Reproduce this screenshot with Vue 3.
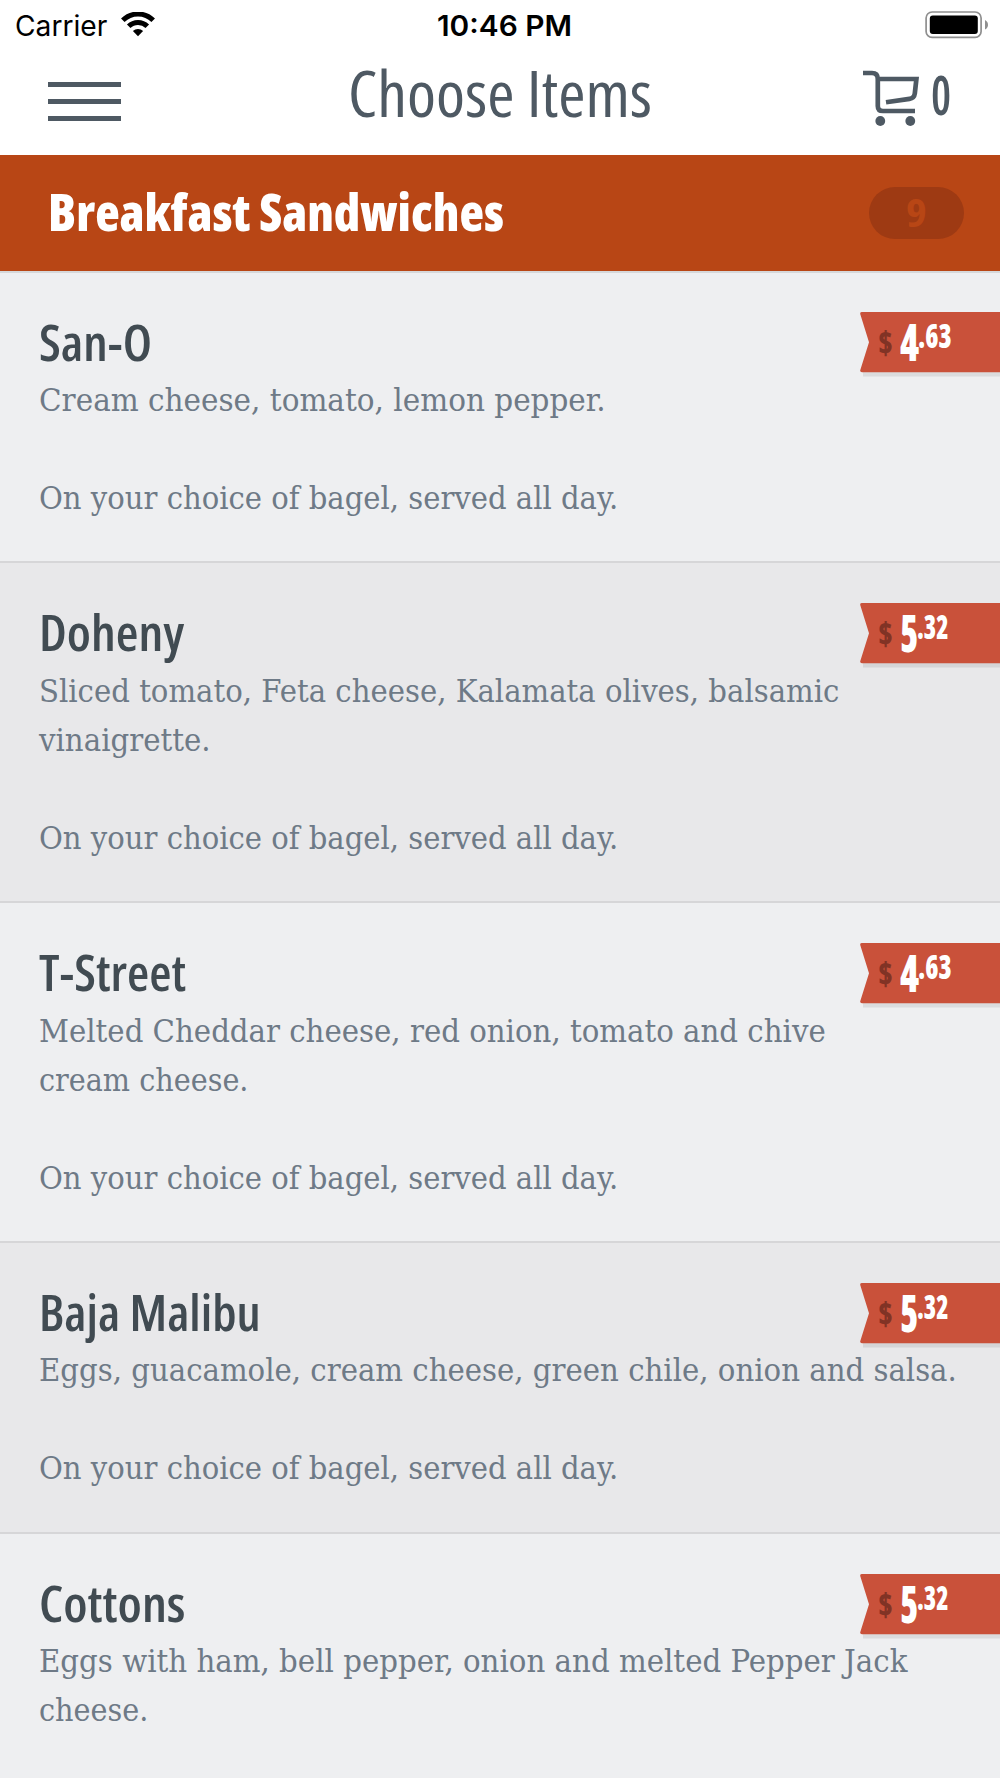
<template>
    <div class="screen">
        <div class="status-bar">
            <div class="carrier">
                <span v-fit="92">Carrier</span>
                <svg class="wifi" width="34" height="25" viewBox="0 0 34 25">
                    <path d="M17 24.3L11.9 19.1A7.3 7.3 0 0 1 22.1 19.1Z" />
                    <path d="M7.7 14.3A13.2 13.2 0 0 1 26.3 14.3" class="arc" />
                    <path d="M1.8 8.3A21.5 21.5 0 0 1 32.2 8.3" class="arc" />
                </svg>
            </div>
            <div class="clock"><span v-fit="135">10:46 PM</span></div>
            <div class="battery-wrap">
                <svg width="64" height="28" viewBox="0 0 64 28">
                    <rect x="1.1" y="1" width="55" height="25.4" rx="6" fill="none" stroke="#8f8f8f" stroke-width="1.7" />
                    <rect x="4.8" y="4.6" width="48" height="18.3" rx="3" />
                    <path d="M60 9V18.6Q63 17 63 13.8T60 9Z" fill="#8f8f8f" />
                </svg>
            </div>
        </div>

        <div class="nav">
            <div class="menu">
                <i></i><i></i><i></i>
            </div>
            <h1 class="nav-title"><span v-fit="304">Choose Items</span></h1>
            <div class="cart">
                <svg width="57" height="56" viewBox="0 0 57 56">
                    <path d="M0 3H9Q14.8 3 14.8 9V36Q14.8 41 20 41H52M14.8 9H53.4L51.8 23.5Q51.2 28.2 46.5 28.8L23 32.3" />
                    <circle cx="17.3" cy="51" r="4.9" />
                    <circle cx="47.3" cy="51" r="4.9" />
                </svg>
                <span v-fit="20" class="cart-count">{{ cartCount }}</span>
            </div>
        </div>

        <div class="section">
            <h2><span v-fit="456">Breakfast Sandwiches</span></h2>
            <div class="badge"><span v-fit="21">9</span></div>
        </div>

        <div v-for="item in items" :key="item.name" class="item">
            <h3><span v-fit="item.width">{{ item.name }}</span></h3>
            <p v-for="(line, i) in item.lines" :key="i">
                <span v-if="line" v-fit="line[1]">{{ line[0] }}</span>
            </p>
            <div class="tag">
                <svg width="140" height="65" viewBox="0 0 140 65">
                    <path d="M3 60H140V64.5H3Z" fill="#000" opacity=".08" />
                    <path d="M2 0H140V60.3H2Q-.3 60.3 .3 58L9 30.2L.3 2.3Q-.3 0 2 0Z" fill="#c9513a" />
                </svg>
                <div class="price">
                    <span v-fit="15" class="currency">$</span>
                    <span v-fit="item.price[0] === '4' ? 19 : 18" class="dollars">{{ item.price.split('.')[0] }}</span>
                    <span v-fit="item.price[0] === '4' ? 34 : 32" class="cents">.{{ item.price.split('.')[1] }}</span>
                </div>
            </div>
        </div>
    </div>
</template>

<script setup>
import { ref } from 'vue'

const cartCount = ref(0)

// squeezes a label to the given width in px
const vFit = {
    mounted(el, binding) {
        const natural = el.offsetWidth
        el.style.transform = `scaleX(${binding.value / natural})`
        el.style.marginRight = `${binding.value - natural}px`
    }
}

const served = ['On your choice of bagel, served all day.', 579]

const items = [
    {
        name: 'San-O',
        width: 113,
        price: '4.63',
        lines: [['Cream cheese, tomato, lemon pepper.', 567], null, served]
    },
    {
        name: 'Doheny',
        width: 145,
        price: '5.32',
        lines: [['Sliced tomato, Feta cheese, Kalamata olives, balsamic', 800], ['vinaigrette.', 172], null, served]
    },
    {
        name: 'T-Street',
        width: 147,
        price: '4.63',
        lines: [['Melted Cheddar cheese, red onion, tomato and chive', 787], ['cream cheese.', 209], null, served]
    },
    {
        name: 'Baja Malibu',
        width: 222,
        price: '5.32',
        lines: [['Eggs, guacamole, cream cheese, green chile, onion and salsa.', 918], null, served]
    },
    {
        name: 'Cottons',
        width: 146,
        price: '5.32',
        lines: [['Eggs with ham, bell pepper, onion and melted Pepper Jack', 868], ['cheese.', 109], null]
    }
]
</script>

<style>
body {
    margin: 0;
    overflow: hidden;
}
</style>

<style scoped>
.screen {
    display: flex;
    flex-direction: column;
    width: 1000px;
    height: 1778px;
    overflow: hidden;
    background: #fff;
    font-family: "Open Sans", "Noto Sans", sans-serif;
    font-stretch: 75%;
}

.screen > div {
    flex-shrink: 0;
}

.screen span {
    display: inline-block;
    white-space: nowrap;
    transform-origin: 0 50%;
}

h1,
h2,
h3,
p {
    margin: 0;
}

.status-bar {
    display: grid;
    grid-template-columns: 1fr auto 1fr;
    height: 50px;
    line-height: 51px;
    font-family: Inter, sans-serif;
    font-size: 28.5px;
    color: #000;
}

.carrier {
    display: flex;
    padding-left: 15px;
}

.wifi {
    margin: 12px 0 0 14px;
}

.wifi .arc {
    fill: none;
    stroke: #000;
    stroke-width: 5;
}

.clock {
    font-weight: 600;
    padding-left: 10px;
}

.battery-wrap {
    display: flex;
    justify-content: flex-end;
    padding: 10.5px 11px 0 0;
}

.nav {
    display: grid;
    grid-template-columns: 1fr auto 1fr;
    height: 104.5px;
    color: #4e5963;
}

.menu {
    display: flex;
    flex-direction: column;
    gap: 12px;
    padding: 32px 0 0 48px;
}

.menu i {
    width: 73px;
    height: 5px;
    background: #4e5963;
}

.nav-title {
    font-size: 64px;
    font-weight: 400;
    line-height: 85px;
}

.nav-title span {
    margin-left: -1px;
}

.cart {
    display: flex;
    justify-content: flex-end;
    padding: 20px 49px 0 0;
}

.cart path {
    fill: none;
    stroke: #4e5963;
    stroke-width: 4.7;
}

.cart circle {
    fill: #4e5963;
}

.cart-count {
    margin-left: 11px;
    font-size: 54px;
    font-weight: 600;
    line-height: 48px;
}

.section {
    display: flex;
    justify-content: space-between;
    height: 116px;
    padding: 0 36px 0 48px;
    border-bottom: 2px solid #d6d8da;
    background: #b84615;
    background-clip: padding-box;
    color: #fff;
}

h2 {
    font-size: 51px;
    font-weight: 800;
    line-height: 113px;
}

.badge {
    width: 95px;
    height: 52px;
    margin-top: 32px;
    border-radius: 26px;
    background: #9e3a13;
    color: #b84615;
    font-size: 40px;
    font-weight: 700;
    line-height: 50px;
    text-align: center;
}

.item {
    position: relative;
    padding: 38px 0 38.6px 39px;
    border-bottom: 2px solid #d6d6d8;
    background: #e8e8ea;
}

.item:nth-child(even) {
    background: #eeeff1;
}

.item:last-child {
    border-bottom: none;
}

h3 {
    margin-bottom: 5.3px;
    font-size: 51px;
    font-weight: 600;
    line-height: 60px;
    color: #414b52;
}

p {
    height: 49px;
    font-family: "DejaVu Serif Condensed", "DejaVu Serif", serif;
    font-stretch: normal;
    font-size: 32.5px;
    line-height: 49px;
    color: #6e7a87;
}

.tag {
    position: absolute;
    top: 39.5px;
    right: 0;
    width: 140px;
    height: 65px;
}

.tag svg {
    display: block;
}

.price {
    position: absolute;
    top: 0;
    left: 18px;
    display: flex;
    color: #fff;
    font-weight: 800;
}

.currency {
    color: #813325;
    font-size: 32px;
    line-height: 60px;
}

.dollars {
    margin-left: 7px;
    font-size: 51px;
    line-height: 58px;
}

.cents {
    margin-left: -1px;
    font-size: 33px;
    line-height: 48px;
}
</style>
